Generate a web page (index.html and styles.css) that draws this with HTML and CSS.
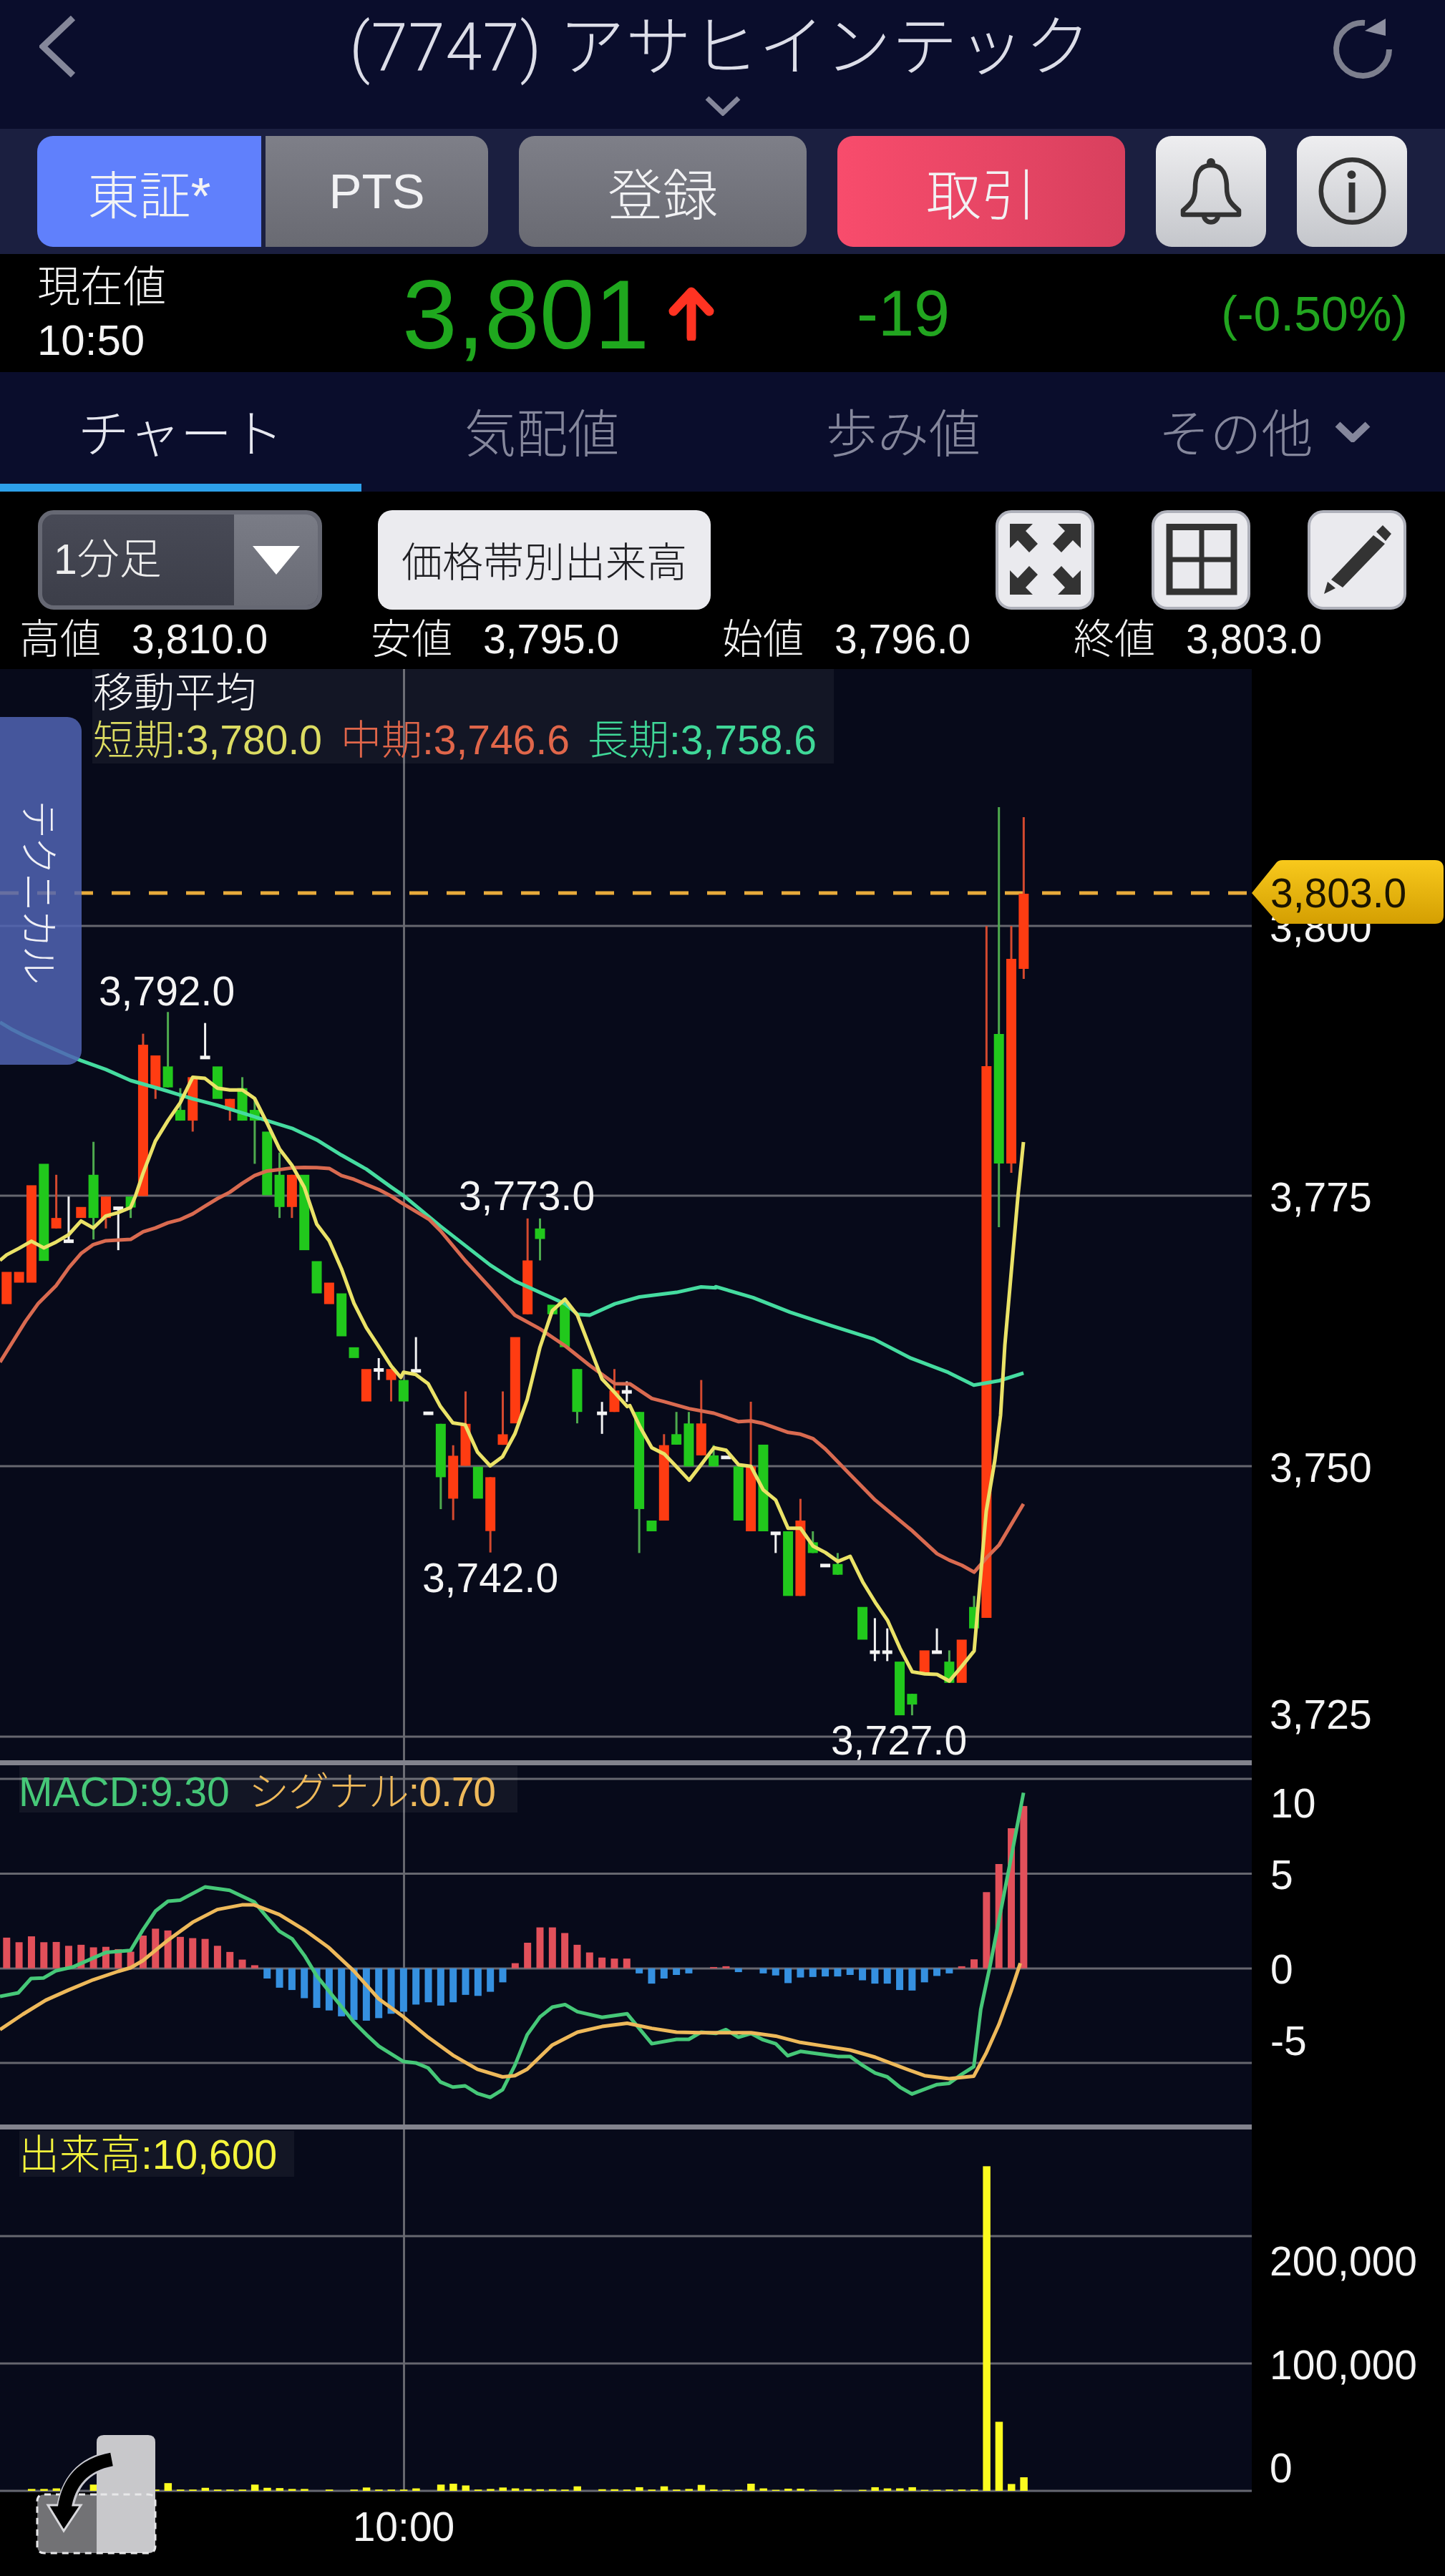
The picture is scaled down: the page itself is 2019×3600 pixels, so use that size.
FILE: index.html
```html
<!DOCTYPE html>
<html lang="ja">
<head>
<meta charset="utf-8">
<title>(7747) アサヒインテック</title>
<link rel="stylesheet" href="styles.css">
</head>
<body>
<div class="page">
  <header class="topbar">
    <div class="topbar-left">
      <svg class="back-icon" viewBox="0 0 51 86"><path d="M47 3 L5 43 L47 83" transform="translate(0 0)"/></svg>
    </div>
    <div class="topbar-center">
      <div class="title">(7747) アサヒインテック</div>
      <svg class="title-chevron" viewBox="0 0 50 28"><path d="M3 3 L25 24 L47 3"/></svg>
    </div>
    <div class="topbar-right">
      <svg class="reload-icon" viewBox="0 0 90 90"><path class="reload-arc" d="M46 10 A37 37 0 1 0 80 47"/><path class="reload-head" d="M75 4 L75 28 L46 21 Z"/></svg>
    </div>
  </header>

  <nav class="toolbar">
    <div class="segment">
      <div class="btn seg-on">東証*</div>
      <div class="btn seg-off">PTS</div>
    </div>
    <div class="btn btn-gray">登録</div>
    <div class="btn btn-red">取引</div>
    <div class="btn btn-light">
      <svg viewBox="0 0 154 155"><circle class="ico-fill" cx="77" cy="37" r="6"/><path class="ico-line" d="M77 41 C60 41 55 56 55 72 C55 88 50 94 38 104 L38 110 L116 110 L116 104 C104 94 99 88 99 72 C99 56 94 41 77 41 Z"/><path class="ico-line" d="M67 110 C67 124 87 124 87 110"/></svg>
    </div>
    <div class="btn btn-light">
      <svg viewBox="0 0 155 155"><ellipse class="ico-line" cx="78" cy="77" rx="44" ry="44"/><circle class="ico-fill" cx="77" cy="54" r="6"/><rect class="ico-fill" x="73" y="65" width="9" height="42"/></svg>
    </div>
  </nav>

  <section class="quote">
    <div class="quote-label"><div>現在値</div><div>10:50</div></div>
    <div class="quote-price">3,801</div>
    <svg class="quote-arrow" viewBox="0 0 64 76"><path d="M32 72 L32 10 M7 35 L32 8 L57 35"/></svg>
    <div class="quote-change">-19</div>
    <div class="quote-pct">(-0.50%)</div>
  </section>

  <nav class="tabs">
    <div class="tab tab-on">チャート</div>
    <div class="tab">気配値</div>
    <div class="tab">歩み値</div>
    <div class="tab">その他<svg class="tab-chevron" viewBox="0 0 50 30"><path d="M4 5 L25 25 L46 5"/></svg></div>
  </nav>

  <section class="controls">
    <div class="select"><span class="select-text">1分足</span><span class="select-arrow"><svg viewBox="0 0 66 40"><path d="M0 0 H66 L33 40 Z"/></svg></span></div>
    <div class="price-band">価格帯別出来高</div>
    <div class="tool-group">
      <div class="tool">
        <svg viewBox="4 4 130 131">
          <path class="tool-fill" d="M20 19 L52 19 L42 29 L59 47 L47 59 L31 42 L20 53 Z"/>
          <path class="tool-fill" d="M119 19 L87 19 L97 29 L80 47 L92 59 L108 42 L119 53 Z"/>
          <path class="tool-fill" d="M20 118 L52 118 L42 108 L59 90 L47 78 L31 95 L20 84 Z"/>
          <path class="tool-fill" d="M119 118 L87 118 L97 108 L80 90 L92 78 L108 95 L119 84 Z"/>
        </svg>
      </div>
      <div class="tool">
        <svg viewBox="4 4 130 131"><path class="tool-grid" d="M25 23.500 H115 V114 H25 Z"/><path class="tool-grid thin" d="M70 23 V114 M25 69 H115"/></svg>
      </div>
      <div class="tool">
        <svg viewBox="4 4 130 131"><path class="tool-fill" d="M33 97 L92 35 L108 47 L49 108 Z M96 30 L105 21 L117 33 L109 43 Z M28 100 L39 109 L23 117 Z"/></svg>
      </div>
    </div>
  </section>

  <section class="ohlc">
    <div class="ohlc-item"><span class="ohlc-key">高値</span><span>3,810.0</span></div>
    <div class="ohlc-item"><span class="ohlc-key">安値</span><span>3,795.0</span></div>
    <div class="ohlc-item"><span class="ohlc-key">始値</span><span>3,796.0</span></div>
    <div class="ohlc-item"><span class="ohlc-key">終値</span><span>3,803.0</span></div>
  </section>

  <section class="chart">
    <svg class="chart-svg" viewBox="0 935 2019 2665">
      <defs>
        <linearGradient id="gold" x1="0" y1="0" x2="0" y2="1"><stop offset="0" stop-color="#f8c91c"/><stop offset="1" stop-color="#d49f02"/></linearGradient>
      </defs>
      <rect class="plot" x="0" y="935" width="1749" height="2548"/>
      <g class="grid">
        <path d="M0 1294 H1749 M0 1671 H1749 M0 2049 H1749 M0 2427 H1749"/>
        <path d="M0 2486 H1749 M0 2618.500 H1749 M0 2751 H1749 M0 2883 H1749"/>
        <path d="M0 3125 H1749 M0 3303 H1749 M0 3481 H1749"/>
        <path d="M564.500 935 V3481"/>
      </g>
      <path class="dash" d="M0 1248 H1749"/>
      <rect class="sep" x="0" y="2460" width="1749" height="7"/>
      <rect class="sep" x="0" y="2969" width="1749" height="7"/>
      <rect class="legend-bg" x="129" y="935" width="1036" height="132"/>
      <rect class="legend-bg" x="27" y="2468" width="696" height="65"/>
      <rect class="legend-bg" x="27" y="2978" width="384" height="64"/>
      <g id="volume"></g>
      <g id="macd"></g>
      <g id="candles"></g>
      <g id="lines"></g>

      <text class="t white" x="130" y="988">移動平均</text>
      <text class="t ma-s" x="130" y="1054">短期:3,780.0</text>
      <text class="t ma-m" x="476" y="1054">中期:3,746.6</text>
      <text class="t ma-l" x="821" y="1054">長期:3,758.6</text>
      <text class="t macd-g" x="26" y="2524">MACD:9.30</text>
      <text class="t macd-o" x="347" y="2524" textLength="346" lengthAdjust="spacing">シグナル:0.70</text>
      <text class="t vol-y" x="26" y="3031">出来高:10,600</text>

      <text class="t white mid" x="233" y="1405">3,792.0</text>
      <text class="t white mid" x="736" y="1691">3,773.0</text>
      <text class="t white mid" x="685" y="2225">3,742.0</text>
      <text class="t white mid" x="1256" y="2452">3,727.0</text>

      <text class="t white" x="1774" y="1316">3,800</text>
      <path d="M1749 1248 L1783 1206 Q1786 1202 1792 1202 L2005 1202 Q2017 1202 2017 1214 L2017 1279 Q2017 1291 2005 1291 L1792 1291 Q1786 1291 1783 1287 Z" fill="url(#gold)"/>
      <text class="t black" x="1775" y="1268">3,803.0</text>
      <text class="t white" x="1774" y="1693">3,775</text>
      <text class="t white" x="1774" y="2071">3,750</text>
      <text class="t white" x="1774" y="2416">3,725</text>
      <text class="t white" x="1775" y="2540">10</text>
      <text class="t white" x="1775" y="2640">5</text>
      <text class="t white" x="1775" y="2772">0</text>
      <text class="t white" x="1775" y="2872">-5</text>
      <text class="t white" x="1774" y="3180">200,000</text>
      <text class="t white" x="1774" y="3325">100,000</text>
      <text class="t white" x="1774" y="3469">0</text>
      <text class="t white mid" x="564" y="3551">10:00</text>

      <g class="swap">
        <path class="swap-light" d="M135 3413 Q135 3403 145 3403 H207 Q217 3403 217 3413 V3558 Q217 3568 207 3568 H135 Z"/>
        <path class="swap-dark" d="M135 3486 H62 Q52 3486 52 3496 V3558 Q52 3568 62 3568 H135 Z"/>
        <path class="swap-dashed" d="M135 3486 H62 Q52 3486 52 3496 V3558 Q52 3568 62 3568 H207 Q217 3568 217 3558 V3496 Q217 3486 207 3486 H135"/>
        <path class="swap-arrow-o" d="M156 3437 Q98 3448 90 3510"/>
        <path class="swap-head" d="M67 3501 H113 L89 3537 Z"/>
        <path class="swap-arrow" d="M156 3437 Q98 3448 90 3506"/>
      </g>
    </svg>
    <div class="tech-tab"><span>テクニカル</span></div>
  </section>
</div>
<script src="chart.js"></script>
</body>
</html>
```
FILE: styles.css
```css
* { box-sizing: border-box; }
html, body { margin: 0; padding: 0; background: #000; }
body { font-family: "Liberation Sans", "Noto Sans CJK JP", sans-serif; color: #fff; }
.page { width: 2019px; height: 3600px; overflow: hidden; display: flex; flex-direction: column; background: #000; }

.topbar { height: 180px; background: #0a0d2c; display: grid; grid-template-columns: 1fr auto 1fr; }
.topbar-left { padding: 22px 0 0 55px; }
.back-icon { width: 51px; height: 86px; display: block; }
.back-icon path { fill: none; stroke: #85879a; stroke-width: 9; }
.topbar-center { display: flex; flex-direction: column; align-items: center; }
.title { font-family: Roboto, "Noto Sans CJK JP", sans-serif; font-size: 92px; line-height: 134px; letter-spacing: 1px; color: #dcdde8; font-weight: 300; white-space: nowrap; margin-right: 6px; }
.title-chevron { width: 50px; height: 28px; display: block; }
.title-chevron path { fill: none; stroke: #85879a; stroke-width: 7; }
.topbar-right { display: flex; justify-content: flex-end; padding: 22px 68px 0 0; }
.reload-icon { width: 90px; height: 90px; display: block; }
.reload-arc { fill: none; stroke: #7d7f8e; stroke-width: 8; }
.reload-head { fill: #8d8fa0; }

.toolbar { height: 175px; background: #1b1f40; display: flex; gap: 43px; padding: 10px 0 10px 52px; }
.btn { height: 155px; border-radius: 22px; display: flex; align-items: center; justify-content: center; font-size: 77px; color: #f2f2f4; font-weight: 300; }
.segment { display: flex; gap: 6px; width: 630px; }
.seg-on { width: 313px; background: #6080fc; border-radius: 22px 0 0 22px; font-size: 72px; }
.seg-off { width: 311px; background: linear-gradient(#7e7f88, #696a72); border-radius: 0 22px 22px 0; font-size: 69px; }
.btn-gray { width: 402px; background: linear-gradient(#7e7f88, #696a72); }
.btn-red { width: 402px; background: linear-gradient(90deg, #f84c6c, #d8405e); }
.btn-light { width: 154px; background: linear-gradient(#eeeef0, #c4c6cb); }
.btn-light svg { width: 154px; height: 155px; display: block; }
.ico-line { fill: none; stroke: #333; stroke-width: 6.500; stroke-linejoin: round; }
.ico-fill { fill: #333; }

.quote { height: 165px; background: #000; display: flex; align-items: center; padding: 0 52px 0 52px; }
.quote-label { width: 510px; font-size: 60px; line-height: 74px; color: #f4f4f4; font-weight: 300; margin-top: 3px; }
.quote-price { font-size: 138px; line-height: 150px; color: #1fa81e; width: 328px; white-space: nowrap; margin-top: 3px; }
.quote-arrow { width: 64px; height: 76px; margin-left: 44px; display: block; }
.quote-arrow path { fill: none; stroke: #ff3322; stroke-width: 13; stroke-linecap: round; stroke-linejoin: round; }
.quote-change { margin-left: 199px; font-size: 90px; color: #22a520; margin-top: 2px; }
.quote-pct { margin-left: auto; font-size: 68px; color: #22a520; }

.tabs { height: 167px; background: #0a0d2c; display: grid; grid-template-columns: repeat(4, 1fr); }
.tab { display: flex; align-items: center; justify-content: center; font-size: 72px; color: #85879c; font-weight: 300; border-bottom: 11px solid transparent; padding-top: 4px; }
.tab-on { color: #e6e7ef; border-bottom-color: #2da0ea; }
.tab-chevron { width: 50px; height: 30px; margin-left: 30px; margin-top: 6px; }
.tab-chevron path { fill: none; stroke: #85879c; stroke-width: 10; }

.controls { height: 165px; display: flex; align-items: flex-start; padding: 26px 54px 0 53px; }
.select { width: 397px; height: 139px; border: 6px solid #666873; border-radius: 22px; overflow: hidden; display: flex; background: linear-gradient(#484a56, #3c3e49); }
.select-text { width: 268px; font-size: 59px; line-height: 127px; padding-left: 16px; color: #eee; font-weight: 300; }
.select-arrow { flex: 1; background: linear-gradient(#7a7c86, #686a74); display: flex; align-items: center; justify-content: center; }
.select-arrow svg { width: 66px; height: 40px; display: block; }
.select-arrow path { fill: #fff; }
.price-band { margin-left: 78px; width: 465px; height: 139px; background: #ebebef; border-radius: 20px; color: #1e1e22; font-size: 57px; font-weight: 300; display: flex; align-items: center; justify-content: center; padding-bottom: 3px; }
.tool-group { margin-left: auto; display: flex; gap: 80px; }
.tool { width: 138px; height: 139px; background: #eaeaee; border: 4px solid #aeb0ba; border-radius: 22px; overflow: hidden; }
.tool svg { width: 130px; height: 131px; display: block; }
.tool-fill { fill: #333; }
.tool-grid { fill: none; stroke: #333; stroke-width: 9; }
.tool-grid.thin { stroke-width: 7; }

.ohlc { height: 83px; display: grid; grid-template-columns: repeat(4, 491px); padding-left: 27px; font-size: 57px; line-height: 83px; color: #f2f2f2; }
.ohlc-item { display: flex; align-items: baseline; white-space: nowrap; height: 83px; overflow: hidden; }
.ohlc-key { width: 157px; font-weight: 300; line-height: 83px; }
.ohlc-item span { line-height: 83px; }

.chart { position: relative; height: 2665px; }
.chart-svg { display: block; width: 2019px; height: 2665px; }
.plot { fill: #070a1a; }
.grid path { fill: none; stroke: #66676f; stroke-width: 3; }
.dash { fill: none; stroke: #e8ab3b; stroke-width: 5; stroke-dasharray: 26 26; }
.sep { fill: #82838d; }
.legend-bg { fill: #fff; fill-opacity: .05; }
.t { font-family: "Liberation Sans", "Noto Sans CJK JP", sans-serif; font-size: 57px; font-weight: 300; }
.mid { text-anchor: middle; }
.white { fill: #f4f4f4; }
.black { fill: #1a1400; }
.ma-s { fill: #dcdc62; }
.ma-m { fill: #e0664a; }
.ma-l { fill: #3fd898; }
.macd-g { fill: #46c878; }
.macd-o { fill: #eeb95a; }
.vol-y { fill: #f4f43c; }

.wick { stroke-width: 3; }
.wick-r { stroke: #d4492f; }
.wick-g { stroke: #4eaa4e; }
.wick-w { stroke: #f2f2f2; stroke-width: 3; }
.body-r { fill: #ff3c12; }
.body-g { fill: #21c81c; }
.body-w { fill: #f4f4f4; }
.line { fill: none; stroke-width: 5; stroke-linejoin: round; }
.line-y { stroke: #eae267; }
.line-o { stroke: #d96a50; }
.line-g { stroke: #45dca0; }
.line-mg { stroke: #46c878; stroke-width: 5; }
.line-mo { stroke: #eeb95a; stroke-width: 5; }
.hist-r { fill: #e2505a; }
.hist-b { fill: #3590e0; }
.vol { fill: #fbfb1f; }

.swap-light { fill: #c8c8cb; }
.swap-dark { fill: #727275; }
.swap-dashed { fill: none; stroke: #e8e8ea; stroke-width: 3; stroke-dasharray: 9 7; }
.swap-arrow-o { fill: none; stroke: #c9c9d0; stroke-width: 24; }
.swap-arrow { fill: none; stroke: #000; stroke-width: 19; }
.swap-head { fill: #000; stroke: #d8d8dc; stroke-width: 3; }

.tech-tab { position: absolute; left: 0; top: 67px; width: 114px; height: 486px; background: rgba(80, 100, 180, .85); border-radius: 0 20px 20px 0; display: flex; align-items: center; justify-content: center; }
.tech-tab span { writing-mode: vertical-rl; text-orientation: sideways; font-size: 54px; font-weight: 300; color: #f0f0f6; letter-spacing: -3px; }
```
FILE: chart.js
```js
(function () {
  var NS = 'http://www.w3.org/2000/svg';
  var STEP = 17.33, X0 = 9.3;
  var X = function (i) { return X0 + i * STEP; };
  var z11 = function (y) { return 1400 + y / 2.8; };
  var z5 = function (y) { return 1500 + y / 1.568; };
  var z12 = function (y) { return 1900 + y / 2.8; };
  var same = function (y) { return y; };

  function el(parent, tag, attrs) {
    var n = document.createElementNS(NS, tag);
    for (var k in attrs) n.setAttribute(k, attrs[k]);
    parent.appendChild(n);
    return n;
  }

  // [index, colour, bodyTop, bodyBottom, wickTop, wickBottom]
  // white entries: [index, 'w', dashY, wickTop, wickBottom]
  var groups = [
    [z11, [
      [0,'r',1057,1183],[1,'r',1057,1099],[2,'r',718,1099],[3,'g',634,1014],
      [4,'r',846,887,677],[5,'w',937,762,938],[6,'r',803,846],[7,'g',677,846,548,930],
      [8,'r',762,846,0,887],[9,'w',808,805,972],[10,'g',762,805,0,846],[11,'r',168,760,125],
      [12,'r',210,335,0,380],[13,'g',253,335,40],[14,'g',423,465,338],[15,'r',295,465,0,508],
      [16,'w',218,83,218],[17,'g',253,380],[18,'r',380,423,0,465],[19,'g',338,465,295],
      [20,'g',423,465,380,634],[21,'g',508,757],[22,'g',677,803,590,846],[23,'r',677,803,0,846],
      [24,'g',677,972],[25,'g',1015,1141],[26,'r',1099,1183],[27,'g',1141,1309],[28,'g',1352,1394]
    ]],
    [z5, [
      [29,'r',648,719],[30,'w',650,624,672],[31,'r',648,672,0,719],[32,'g',672,719],
      [33,'w',652,578,655],[34,'w',745],[35,'g',768,885,0,955],[36,'r',838,932,815,979],
      [37,'r',768,860,697],[38,'g',862,932],[39,'r',885,1003,0,1050],[40,'r',791,814,697],
      [41,'r',578,767],[42,'r',410,528,318],[43,'g',340,363,318,410],[44,'g',507,528],
      [45,'g',505,600],[46,'g',648,742,0,767],[48,'w',745,720,790],[49,'r',695,742,648],
      [50,'w',698,675,720]
    ]],
    [z12, [
      [51,'g',205,585,0,757],[52,'g',630,672],[53,'r',335,630,292],[54,'g',292,333,205],
      [55,'g',250,418,205],[56,'r',250,375,80],[57,'g',375,418,335],[58,'w',383],
      [59,'g',418,630],[60,'r',418,672,165],[61,'g',333,672],[62,'w',680,680,757],
      [63,'g',672,925],[64,'r',630,925,545],[65,'g',715,757,672],[66,'w',806],
      [67,'g',800,842,757],[69,'g',968,1096],[70,'w',1145,1012,1180],[71,'w',1145,1052,1180],
      [72,'g',1182,1392],[73,'g',1308,1350,0,1392],[74,'r',1138,1225],[75,'w',1145,1052,1145],
      [76,'g',1182,1265,1138],[77,'r',1096,1265],[78,'g',968,1052,925]
    ]],
    [same, [
      [79,'r',1490,2261,1294],[80,'g',1445,1626,1128,1715],
      [81,'r',1340,1626,1294,1639],[82,'r',1249,1354,1142,1368]
    ]]
  ];

  var candles = document.getElementById('candles');
  groups.forEach(function (g) {
    var f = g[0];
    g[1].forEach(function (c) {
      var x = X(c[0]);
      if (c[1] === 'w') {
        if (c[3] !== undefined) el(candles, 'line', { x1: x, x2: x, y1: f(c[3]), y2: f(c[4]), 'class': 'wick-w' });
        el(candles, 'rect', { x: x - 7, y: f(c[2]) - 2.5, width: 14, height: 5, 'class': 'body-w' });
        return;
      }
      var t = f(c[2]), b = f(c[3]);
      var wt = c[4] ? f(c[4]) : t, wb = c[5] ? f(c[5]) : b;
      if (wt !== t || wb !== b) el(candles, 'line', { x1: x, x2: x, y1: wt, y2: wb, 'class': 'wick wick-' + c[1] });
      el(candles, 'rect', { x: x - 7, y: t, width: 14, height: b - t, 'class': 'body-' + c[1] });
    });
  });

  function conv(list, fx, fy) {
    return list.map(function (p) { return fx(p[0]).toFixed(1) + ',' + fy(p[1]).toFixed(1); }).join(' ');
  }
  var x28 = function (x) { return x / 2.8; };
  var x1568 = function (x) { return x / 1.568; };
  var x12 = function (x) { return 880 + x / 2.8; };
  var x4 = function (x) { return 1000 + x / 1.539; };
  var y4 = function (y) { return 1050 + y / 1.12; };

  function line(cls, parts) {
    el(document.getElementById('lines'), 'polyline', { points: parts.join(' '), 'class': 'line ' + cls });
  }

  // moving averages
  line('line-g', [
    conv([[0,80],[50,110],[100,135],[200,180],[268,210],[317,230],[414,265],[511,308],[560,322],[657,350],[754,380],[851,405],[948,435],[1045,465],[1142,495],[1239,540],[1336,600],[1433,655],[1530,725]], x28, z11),
    conv([[884,268],[965,335],[1074,420],[1128,455],[1238,505],[1265,528],[1292,530],[1347,505],[1401,490],[1482,480],[1536,468],[1568,470]], x1568, z5),
    conv([[0,838],[80,855],[160,878],[240,897],[340,920],[420,950],[500,972],[555,992],[610,985],[662,973]], x4, y4)
  ]);
  line('line-o', [
    conv([[0,1410],[50,1330],[100,1250],[150,1180],[220,1110],[270,1040],[317,985],[365,950],[414,935],[462,932],[511,930],[560,900],[608,885],[657,865],[705,852],[754,830],[802,800],[851,770],[899,745],[948,710],[996,680],[1045,662],[1093,657],[1142,650],[1190,648],[1239,649],[1288,652],[1336,680],[1385,695],[1433,715],[1482,735],[1530,760],[1568,785]], x28, z11),
    conv([[940,320],[965,345],[1019,410],[1074,470],[1128,530],[1183,560],[1238,597],[1292,640],[1347,680]], x1568, z5),
    conv([[0,95],[86,152],[135,165],[232,192],[329,210],[426,243],[474,240],[522,250],[620,285],[668,292],[717,310],[765,350],[814,400],[862,450],[960,550],[1008,590],[1105,670],[1202,760],[1250,785],[1299,805],[1347,832],[1396,775],[1445,725],[1540,565]], x12, z12)
  ]);
  line('line-y', [
    conv([[0,1012],[26,990],[74,965],[123,937],[171,963],[220,940],[268,912],[317,858],[365,885],[414,838],[462,825],[511,805],[530,760],[560,670],[608,545],[657,465],[705,395],[754,295],[802,300],[851,338],[899,345],[948,345],[996,378],[1045,475],[1093,575],[1142,640],[1190,725],[1239,870],[1288,935],[1336,1045],[1385,1180],[1433,1275],[1482,1350],[1530,1425],[1568,1470]], x28, z11),
    conv([[884,655],[911,660],[938,680],[965,730],[992,766],[1019,770],[1046,830],[1074,860],[1101,840],[1128,790],[1155,715],[1183,600],[1210,520],[1238,495],[1265,530],[1292,600],[1319,670],[1347,700],[1374,730]], x1568, z5),
    conv([[0,180],[38,260],[86,345],[135,370],[183,420],[232,472],[280,410],[329,345],[377,355],[426,412],[474,418],[522,510],[571,550],[619,660],[668,660],[717,730],[765,755],[814,790],[862,770],[911,870],[960,950],[1008,1020],[1057,1130],[1105,1222],[1154,1230],[1202,1232],[1250,1258],[1299,1200],[1347,1140]], x12, z12),
    '1378,2112 1390,2041 1398,1978 1404,1880 1412.6,1782 1422,1675 1430,1596'
  ]);

  // MACD histogram: value is the zoomed y of the bar end, baseline 870
  var my = function (y) { return 2440 + y / 2.8; };
  var hist = [750,768,745,768,767,782,778,788,786,795,805,742,715,722,747,752,755,782,806,836,858,
    910,946,955,987,1025,1035,1058,1072,1075,1065,1048,1040,1012,1003,1016,1003,974,978,962,925,
    850,770,710,710,732,778,808,828,832,832,890,930,910,896,890,870,865,862,885,870,890,898,928,906,904,
    902,902,896,917,930,930,955,957,925,900,890,862,835,572,462,322,235];
  var macd = document.getElementById('macd');
  hist.forEach(function (v, i) {
    if (v === 870) return;
    var y0 = my(870), y1 = my(v);
    el(macd, 'rect', {
      x: X(i) - 5, y: Math.min(y0, y1), width: 10, height: Math.abs(y1 - y0),
      'class': v < 870 ? 'hist-r' : 'hist-b'
    });
  });

  line('line-mg', [
    conv([[0,980],[40,966],[68,910],[95,908],[122,880],[160,865],[204,830],[232,808],[286,800],[313,720],[341,645],[368,608],[395,603],[449,552],[503,565],[557,610],[585,670],[612,725],[640,755],[667,820],[694,900],[721,960],[748,1020],[775,1080],[803,1130],[830,1175],[884,1235],[911,1240],[938,1260],[965,1315],[992,1335],[1019,1330],[1046,1360],[1074,1375],[1101,1345],[1128,1250],[1155,1130],[1183,1060],[1210,1022],[1238,1012],[1265,1040],[1319,1062],[1374,1048],[1428,1165],[1482,1148],[1509,1148],[1536,1120]], x1568, my),
    conv([[0,1125],[22,1110],[49,1140],[76,1125],[102,1150],[129,1165],[155,1212],[182,1195],[235,1208],[262,1215],[289,1215],[316,1250],[343,1280],[369,1295],[396,1335],[422,1362],[476,1325],[502,1320],[529,1285],[555,1255],[570,1030],[590,860],[635,440],[662,183]], x4, my)
  ]);
  line('line-mo', [
    conv([[0,1110],[50,1050],[100,995],[150,955],[204,915],[259,882],[286,868],[313,840],[368,760],[422,690],[476,640],[530,622],[557,622],[612,660],[667,720],[721,790],[775,880],[830,990],[884,1060],[938,1140],[992,1210],[1046,1265],[1101,1295],[1128,1290],[1155,1265],[1210,1170],[1265,1120],[1319,1098],[1374,1085],[1428,1105],[1482,1120],[1536,1122]], x1568, my),
    conv([[0,1122],[76,1122],[129,1135],[182,1160],[235,1175],[289,1190],[343,1218],[396,1255],[449,1290],[502,1302],[555,1292],[582,1200],[609,1090],[635,960],[655,850]], x4, my)
  ]);

  // volume: zoomed y of the bar top, baseline 1276
  var vy = function (y) { return 2960 + y / 2.45; };
  var vols = {2:1270,3:1270,4:1268,7:1255,12:1272,13:1250,14:1272,15:1272,16:1266,17:1272,18:1272,19:1272,20:1255,21:1266,22:1267,23:1270,24:1270,26:1272,28:1272,29:1265,30:1272,31:1272,32:1272,33:1268,35:1255,36:1252,37:1258,38:1272,39:1270,40:1265,41:1268,42:1270,43:1271,44:1271,45:1272,46:1261,48:1271,49:1271,50:1272,51:1264,52:1272,53:1261,54:1272,55:1270,56:1256,57:1272,58:1273,59:1273,60:1252,61:1268,62:1273,63:1269,64:1269,65:1273,67:1273,69:1273,70:1264,71:1268,72:1268,73:1264,74:1273,75:1273,76:1272,77:1272,78:1272,79:165,80:1040,81:1253,82:1230};
  var volume = document.getElementById('volume');
  Object.keys(vols).forEach(function (k) {
    var i = +k, y = vy(vols[k]);
    el(volume, 'rect', { x: X(i) - 5, y: y, width: 10.5, height: 3481 - y, 'class': 'vol' });
  });
})();
```
